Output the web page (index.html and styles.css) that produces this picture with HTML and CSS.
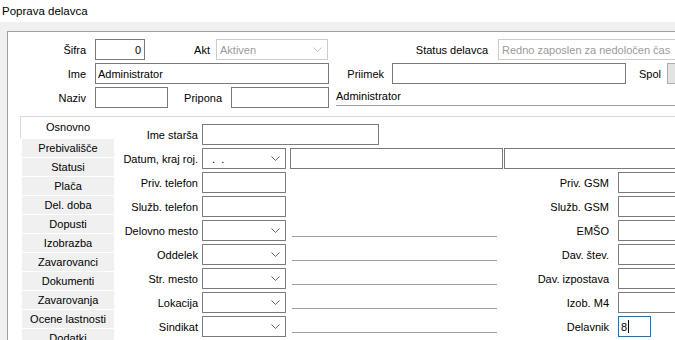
FILE: index.html
```html
<!DOCTYPE html>
<html lang="sl">
<head>
    <meta charset="UTF-8">
    <title>Poprava delavca</title>
    <link rel="stylesheet" href="styles.css">
</head>
<body>
    <div class="titlebar">Poprava delavca</div>
    <div class="shell">
        <div class="frame">
            <div class="head">
                <div class="row">
                    <span class="lbl headLbl">Šifra</span>
                    <div class="box sifra">0</div>
                    <span class="lbl aktLbl">Akt</span>
                    <div class="box combo off akt"><span>Aktiven</span><svg class="chev" width="9" height="5" viewBox="0 0 9 5"><path d="M0.5 0.5 L4.5 4.5 L8.5 0.5" fill="none" stroke="currentColor"/></svg></div>
                    <span class="lbl statusLbl">Status delavca</span>
                    <div class="box combo off status"><span>Redno zaposlen za nedoločen čas</span></div>
                </div>
                <div class="row">
                    <span class="lbl headLbl">Ime</span>
                    <div class="box ime">Administrator</div>
                    <span class="lbl priimekLbl">Priimek</span>
                    <div class="box priimek"></div>
                    <span class="lbl spolLbl">Spol</span>
                    <div class="box spol"></div>
                </div>
                <div class="row">
                    <span class="lbl headLbl">Naziv</span>
                    <div class="box naziv"></div>
                    <span class="lbl priponaLbl">Pripona</span>
                    <div class="box pripona"></div>
                    <span class="fullName">Administrator</span>
                </div>
            </div>

            <div class="tabs">
                <ul class="tabList">
                    <li class="tab active">Osnovno</li>
                    <li class="tab">Prebivališče</li>
                    <li class="tab">Statusi</li>
                    <li class="tab">Plača</li>
                    <li class="tab">Del. doba</li>
                    <li class="tab">Dopusti</li>
                    <li class="tab">Izobrazba</li>
                    <li class="tab">Zavarovanci</li>
                    <li class="tab">Dokumenti</li>
                    <li class="tab">Zavarovanja</li>
                    <li class="tab">Ocene lastnosti</li>
                    <li class="tab">Dodatki</li>
                </ul>

                <div class="page">
                    <div class="row">
                        <span class="lbl pageLbl">Ime starša</span>
                        <div class="box wide"></div>
                    </div>
                    <div class="row">
                        <span class="lbl pageLbl">Datum, kraj roj.</span>
                        <div class="box combo ctrl"><span class="date">.&nbsp;&nbsp;.</span><svg class="chev" width="9" height="5" viewBox="0 0 9 5"><path d="M0.5 0.5 L4.5 4.5 L8.5 0.5" fill="none" stroke="currentColor"/></svg></div>
                        <div class="box kraj"></div>
                        <div class="box rest"></div>
                    </div>
                    <div class="row">
                        <span class="lbl pageLbl">Priv. telefon</span>
                        <div class="box ctrl"></div>
                        <span class="mid"></span>
                        <span class="lbl rightLbl">Priv. GSM</span>
                        <div class="box rightBox"></div>
                    </div>
                    <div class="row">
                        <span class="lbl pageLbl">Služb. telefon</span>
                        <div class="box ctrl"></div>
                        <span class="mid"></span>
                        <span class="lbl rightLbl">Služb. GSM</span>
                        <div class="box rightBox"></div>
                    </div>
                    <div class="row">
                        <span class="lbl pageLbl">Delovno mesto</span>
                        <div class="box combo ctrl"><span></span><svg class="chev" width="9" height="5" viewBox="0 0 9 5"><path d="M0.5 0.5 L4.5 4.5 L8.5 0.5" fill="none" stroke="currentColor"/></svg></div>
                        <span class="mid line"></span>
                        <span class="lbl rightLbl">EMŠO</span>
                        <div class="box rightBox"></div>
                    </div>
                    <div class="row">
                        <span class="lbl pageLbl">Oddelek</span>
                        <div class="box combo ctrl"><span></span><svg class="chev" width="9" height="5" viewBox="0 0 9 5"><path d="M0.5 0.5 L4.5 4.5 L8.5 0.5" fill="none" stroke="currentColor"/></svg></div>
                        <span class="mid line"></span>
                        <span class="lbl rightLbl">Dav. štev.</span>
                        <div class="box rightBox"></div>
                    </div>
                    <div class="row">
                        <span class="lbl pageLbl">Str. mesto</span>
                        <div class="box combo ctrl"><span></span><svg class="chev" width="9" height="5" viewBox="0 0 9 5"><path d="M0.5 0.5 L4.5 4.5 L8.5 0.5" fill="none" stroke="currentColor"/></svg></div>
                        <span class="mid line"></span>
                        <span class="lbl rightLbl">Dav. izpostava</span>
                        <div class="box rightBox"></div>
                    </div>
                    <div class="row">
                        <span class="lbl pageLbl">Lokacija</span>
                        <div class="box combo ctrl"><span></span><svg class="chev" width="9" height="5" viewBox="0 0 9 5"><path d="M0.5 0.5 L4.5 4.5 L8.5 0.5" fill="none" stroke="currentColor"/></svg></div>
                        <span class="mid line"></span>
                        <span class="lbl rightLbl">Izob. M4</span>
                        <div class="box rightBox"></div>
                    </div>
                    <div class="row">
                        <span class="lbl pageLbl">Sindikat</span>
                        <div class="box combo ctrl"><span></span><svg class="chev" width="9" height="5" viewBox="0 0 9 5"><path d="M0.5 0.5 L4.5 4.5 L8.5 0.5" fill="none" stroke="currentColor"/></svg></div>
                        <span class="mid line"></span>
                        <span class="lbl rightLbl">Delavnik</span>
                        <div class="box delavnik">8<span class="caret"></span></div>
                    </div>
                </div>
            </div>
        </div>
    </div>
</body>
</html>
```

FILE: styles.css
```css
body {
    margin: 0;
    height: 340px;
    overflow: hidden;
    background: #f0f0f0;
    font-family: "Liberation Sans", Arial, sans-serif;
    font-size: 11px;
    color: #000;
}

.titlebar {
    height: 22px;
    line-height: 22px;
    padding-left: 2px;
    background: #fff;
    font-size: 11.5px;
}

.shell {
    padding: 9px 0 0 7px;
}

.frame {
    height: 320px;
    background: #fff;
    border-top: 1px solid #a0a0a0;
    border-left: 1px solid #a0a0a0;
}

.head {
    display: flex;
    flex-direction: column;
    row-gap: 3px;
    padding-top: 7px;
}

.row {
    display: flex;
    align-items: center;
    height: 21px;
}

.lbl {
    flex: none;
    text-align: right;
    white-space: nowrap;
}

.box {
    flex: none;
    display: flex;
    align-items: center;
    height: 21px;
    box-sizing: border-box;
    padding: 0 2px;
    border: 1px solid #7a7a7a;
    background: #fff;
    white-space: nowrap;
    overflow: hidden;
}

.combo {
    justify-content: space-between;
    padding: 0 5px 0 3px;
    color: #000;
}

.chev {
    flex: none;
    color: #606060;
}

.combo.off {
    border-color: #cccccc;
    color: #9a9a9a;
}

.combo.off .chev {
    color: #c0c0c0;
}

/* header */
.headLbl {
    width: 78px;
    margin-right: 9px;
}

.sifra {
    width: 50px;
    justify-content: flex-end;
    padding-right: 3px;
}

.aktLbl {
    width: 65px;
    margin-right: 6px;
}

.akt {
    width: 112px;
}

.statusLbl {
    width: 160px;
    margin-right: 10px;
}

.status {
    width: 200px;
}

.ime {
    width: 234px;
}

.priimekLbl {
    width: 55px;
    margin-right: 8px;
}

.priimek {
    width: 234px;
}

.spolLbl {
    width: 35px;
    margin-right: 6px;
}

.spol {
    width: 30px;
    background: #e3e3e3;
    border-color: #adadad;
}

.naziv {
    width: 73px;
}

.priponaLbl {
    width: 54px;
    margin-right: 9px;
}

.pripona {
    width: 98px;
}

.fullName {
    flex: 1;
    align-self: flex-start;
    height: 18px;
    line-height: 18px;
    margin-left: 7px;
    border-bottom: 1px solid #a0a0a0;
    white-space: nowrap;
}

/* tabs */
.tabs {
    display: flex;
    align-items: flex-start;
    margin: 8px 0 0 12px;
    border-top: 1px solid #dadada;
}

.tabList {
    flex: none;
    width: 95px;
    margin: -1px 0 0 0;
    padding: 0;
    list-style: none;
}

.tab {
    width: 92px;
    height: 18px;
    line-height: 18px;
    margin: 0 0 1px 2px;
    background: #f0f0f0;
    text-align: center;
    white-space: nowrap;
}

.tab.active {
    width: 94px;
    height: 21px;
    line-height: 20px;
    margin: 0 0 1px 0;
    background: #fff;
    border-top: 1px solid #dadada;
    border-left: 1px solid #dadada;
}

.page {
    flex: 1;
    display: flex;
    flex-direction: column;
    row-gap: 3px;
    padding-top: 7px;
}

.pageLbl {
    width: 83px;
    margin-right: 4px;
}

.wide {
    width: 177px;
}

.ctrl {
    width: 84px;
}

.date {
    padding-left: 6px;
}

.kraj {
    width: 213px;
    margin-left: 4px;
}

.rest {
    width: 200px;
    margin-left: 1px;
}

.mid {
    flex: none;
    align-self: flex-start;
    width: 205px;
    height: 16px;
    margin-left: 6px;
}

.mid.line {
    border-bottom: 1px solid #a0a0a0;
}

.rightLbl {
    width: 112px;
    margin-right: 9px;
}

.rightBox {
    width: 60px;
}

.delavnik {
    width: 33px;
    border-color: #0078d7;
}

.caret {
    width: 1px;
    height: 13px;
    margin-left: 1px;
    background: #000;
}
```
